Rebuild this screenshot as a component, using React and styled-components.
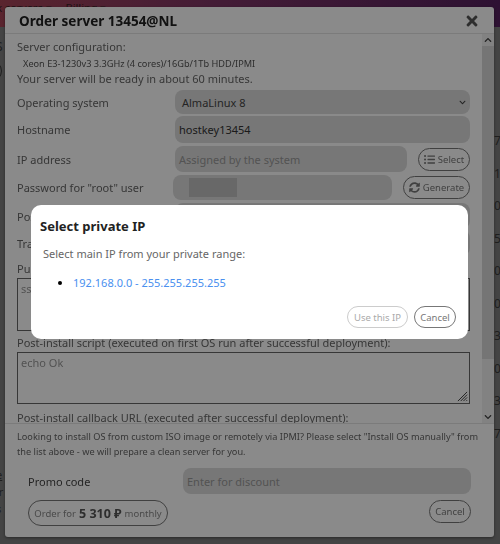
import React from 'react';
import styled, { createGlobalStyle } from 'styled-components';
import { FaTimes, FaListUl, FaSyncAlt, FaChevronDown, FaChevronUp } from 'react-icons/fa';

const GlobalStyle = createGlobalStyle`
  html, body {
    margin: 0;
    height: 100%;
    overflow: hidden;
  }
  body {
    font-family: "Noto Sans", "Liberation Sans", sans-serif;
    background: #7e7e7e;
  }
`;

const rightCells = ['70', '10', '00', '50', '00', '00', '30', '00', '30', '70'];

function App() {
  return (
    <>
      <GlobalStyle />
      <Page>
        <TopBar>
          <NavItem>Rack servers ▾</NavItem>
          <NavItem>Billing ▾</NavItem>
        </TopBar>
        <PageBody>
          <LeftEdge>
            <span>S</span>
            <EdgeCircle />
            <EdgeFooter>
              <u>e</u>
              <span>ir</span>
              <span>s</span>
            </EdgeFooter>
          </LeftEdge>
          <RightEdge>
            {rightCells.map((cell, i) => (
              <span key={i}>{cell}</span>
            ))}
          </RightEdge>
        </PageBody>
      </Page>

      <Overlay $dim="0">
        <OrderModal>
          <ModalHeader>
            <ModalTitle>Order server 13454@NL</ModalTitle>
            <CloseIcon />
          </ModalHeader>

          <ModalScroll>
            <ScrollContent>
              <Line>Server configuration:</Line>
              <SmallLine>Xeon E3-1230v3 3.3GHz (4 cores)/16Gb/1Tb HDD/IPMI</SmallLine>
              <Line>Your server will be ready in about 60 minutes.</Line>

              <FormRow $mt="3px">
                <Label>Operating system</Label>
                <SelectBox>
                  AlmaLinux 8
                  <FaChevronDown size={7} />
                </SelectBox>
              </FormRow>
              <FormRow $mt="2px">
                <Label>Hostname</Label>
                <Field $h="27px">hostkey13454</Field>
              </FormRow>
              <FormRow $mt="3px">
                <Label>IP address</Label>
                <Field $h="26px" $placeholder>Assigned by the system</Field>
                <PillButton $ml="11px" $w="52px" $h="23px">
                  <FaListUl size={11} /> Select
                </PillButton>
              </FormRow>
              <FormRow $mt="3px">
                <Label>Password for "root" user</Label>
                <Field $h="25px" $ml="-2px">
                  <BlurPatch />
                </Field>
                <PillButton $ml="11px" $w="67px" $h="23px">
                  <FaSyncAlt size={11} /> Generate
                </PillButton>
              </FormRow>
              <FormRow $mt="3px">
                <Label>Post-install action</Label>
                <Field $h="26px" />
              </FormRow>
              <FormRow $mt="1px">
                <Label>Traffic plan</Label>
                <Field $h="26px" />
              </FormRow>

              <BlockLabel $mt="5px">Public SSH keys</BlockLabel>
              <TextBox $h="53px">ssh-rsa</TextBox>
              <BlockLabel $mt="4px">
                Post-install script (executed on first OS run after successful deployment):
              </BlockLabel>
              <TextBox $h="52px">
                echo Ok
                <Grip viewBox="0 0 12 12">
                  <path d="M11 1 1 11M11 4 4 11M11 7 7 11M11 10 10 11" stroke="#333" strokeWidth="1" />
                </Grip>
              </TextBox>
              <BlockLabel $mt="6px">
                Post-install callback URL (executed after successful deployment):
              </BlockLabel>
            </ScrollContent>
            <ScrollBar>
              <ScrollArrow>
                <FaChevronUp size={8} />
              </ScrollArrow>
              <ScrollThumb />
              <ScrollTrack />
              <ScrollArrow>
                <FaChevronDown size={8} />
              </ScrollArrow>
            </ScrollBar>
          </ModalScroll>

          <ModalFooter>
            <Hint>
              Looking to install OS from custom ISO image or remotely via IPMI? Please select "Install OS manually" from
              <br />
              the list above - we will prepare a clean server for you.
            </Hint>
            <PromoRow>
              <PromoLabel>Promo code</PromoLabel>
              <Field $h="26px" $placeholder $w="288px">Enter for discount</Field>
            </PromoRow>
            <ActionRow>
              <OrderButton>
                <span>Order for</span>
                <strong>5 310 ₽</strong>
                <span>monthly</span>
              </OrderButton>
              <PillButton $w="42px" $h="23px">Cancel</PillButton>
            </ActionRow>
          </ModalFooter>
        </OrderModal>
      </Overlay>

      <Overlay $dim="0.46">
        <Dialog>
          <DialogTitle>Select private IP</DialogTitle>
          <DialogText>Select main IP from your private range:</DialogText>
          <RangeList>
            <li>
              <RangeLink href="#">192.168.0.0 - 255.255.255.255</RangeLink>
            </li>
          </RangeList>
          <DialogActions>
            <PillButton $w="61px" $h="22px" $disabled>Use this IP</PillButton>
            <PillButton $w="42px" $h="22px">Cancel</PillButton>
          </DialogActions>
        </Dialog>
      </Overlay>
    </>
  );
}

const Page = styled.div`
  width: 500px;
  height: 544px;
  display: flex;
  flex-direction: column;
  overflow: hidden;
  background: #7e7e7e;
`;

const TopBar = styled.div`
  height: 27px;
  flex: none;
  display: flex;
  gap: 14px;
  margin-left: -22px;
  width: 522px;
  background: linear-gradient(90deg, #aa4655 0%, #7e3565 45%, #55215e 100%);
  color: #3a2025;
  font-size: 11px;
  line-height: 15px;
`;

const NavItem = styled.span`
  white-space: nowrap;
`;

const PageBody = styled.div`
  flex: 1;
  display: flex;
  justify-content: space-between;
  color: #3a3a3a;
  font-size: 12px;
`;

const LeftEdge = styled.div`
  display: flex;
  flex-direction: column;
  align-items: flex-start;
  padding-top: 11px;
  margin-left: -4px;
`;

const EdgeCircle = styled.div`
  width: 20px;
  height: 20px;
  margin: 5px 0 0 -16px;
  border: 1px solid #3a3a3a;
  border-radius: 50%;
`;

const EdgeFooter = styled.div`
  margin-top: auto;
  margin-bottom: 28px;
  display: flex;
  flex-direction: column;
  gap: 2px;
  font-size: 11px;
  line-height: 15px;
`;

const RightEdge = styled.div`
  display: flex;
  flex-direction: column;
  gap: 16px;
  padding: 106px 0 0 0;
  width: 6px;
  overflow: hidden;
  line-height: 16.5px;

  span {
    display: block;
  }
`;

const Overlay = styled.div`
  position: fixed;
  inset: 0;
  display: flex;
  align-items: center;
  justify-content: center;
  padding-right: 1px;
  background: rgba(0, 0, 0, ${(p) => p.$dim});
`;

const OrderModal = styled.div`
  width: 489px;
  height: 530px;
  display: flex;
  flex-direction: column;
  border-radius: 3px;
  background: #fff;
  color: #666;
  box-shadow: 0 1px 3px rgba(0, 0, 0, 0.4);
`;

const ModalHeader = styled.div`
  height: 27px;
  flex: none;
  display: flex;
  align-items: center;
  justify-content: space-between;
  padding: 1px 14px 0 14px;
  box-sizing: border-box;
  border-bottom: 1px solid #e4e4e4;
`;

const ModalTitle = styled.div`
  font-size: 13.5px;
  font-weight: 700;
  color: #222;
`;

const CloseIcon = styled(FaTimes)`
  width: 16px;
  height: 16px;
  color: #555;
`;

const ModalScroll = styled.div`
  flex: 1;
  min-height: 0;
  display: flex;
  overflow: hidden;
  border-bottom: 1px solid #e4e4e4;
`;

const ScrollContent = styled.div`
  flex: 1;
  min-width: 0;
  padding: 5px 0 0 12px;
  font-size: 11px;
`;

const ScrollBar = styled.div`
  width: 12px;
  flex: none;
  margin-left: 12px;
  display: flex;
  flex-direction: column;
  background: #f1f1f1;
`;

const ScrollArrow = styled.div`
  height: 12px;
  flex: none;
  display: flex;
  align-items: center;
  justify-content: center;
  color: #444;
`;

const ScrollThumb = styled.div`
  height: 313px;
  flex: none;
  background: #d8d8d8;
`;

const ScrollTrack = styled.div`
  flex: 1;
`;

const Line = styled.div`
  height: 16px;
  line-height: 16px;
  white-space: nowrap;
`;

const SmallLine = styled(Line)`
  padding-left: 6px;
  font-size: 9.2px;
  line-height: 17px;
  color: #555;
`;

const FormRow = styled.div`
  display: flex;
  align-items: center;
  margin-top: ${(p) => p.$mt};
`;

const Label = styled.div`
  width: 158px;
  flex: none;
  white-space: nowrap;
  overflow: hidden;
`;

const fieldBg = '#dcdcdc';

const SelectBox = styled.div`
  flex: 1;
  height: 24px;
  display: flex;
  align-items: center;
  justify-content: space-between;
  padding: 0 4px 0 7px;
  border-radius: 8px;
  background: ${fieldBg};
  color: #444;
`;

const Field = styled.div`
  position: relative;
  flex: ${(p) => (p.$w ? 'none' : '1')};
  width: ${(p) => p.$w || 'auto'};
  height: ${(p) => p.$h};
  margin-left: ${(p) => p.$ml || 0};
  display: flex;
  align-items: center;
  padding: 0 4px;
  box-sizing: border-box;
  border-radius: 8px;
  background: ${fieldBg};
  color: ${(p) => (p.$placeholder ? '#999' : '#333')};
`;

const BlurPatch = styled.div`
  position: absolute;
  left: 16px;
  top: 3px;
  width: 48px;
  height: 19px;
  background: #c0c0c0;
  filter: blur(0.5px);
`;

const PillButton = styled.div`
  flex: none;
  width: ${(p) => p.$w};
  height: ${(p) => p.$h};
  margin-left: ${(p) => p.$ml || 0};
  display: flex;
  align-items: center;
  justify-content: center;
  gap: 3px;
  box-sizing: border-box;
  border: 1px solid ${(p) => (p.$disabled ? '#ccc' : '#777')};
  border-radius: 12px;
  background: #fff;
  color: ${(p) => (p.$disabled ? '#aaa' : '#777')};
  font-size: 9.5px;
  white-space: nowrap;
`;

const BlockLabel = styled.div`
  margin-top: ${(p) => p.$mt};
  height: 16px;
  line-height: 16px;
  white-space: nowrap;
`;

const TextBox = styled.div`
  position: relative;
  height: ${(p) => p.$h};
  margin-top: 1px;
  padding: 2px 3px;
  box-sizing: border-box;
  border: 1px solid #666;
  color: #999;
`;

const Grip = styled.svg`
  position: absolute;
  right: 1px;
  bottom: 1px;
  width: 11px;
  height: 11px;
`;

const ModalFooter = styled.div`
  height: 113px;
  flex: none;
  padding: 6px 23px 0 12px;
  box-sizing: border-box;
`;

const Hint = styled.div`
  font-size: 9.2px;
  line-height: 14.5px;
  color: #666;
  white-space: nowrap;
`;

const PromoRow = styled.div`
  display: flex;
  align-items: center;
  justify-content: space-between;
  margin-top: 9px;
  padding-left: 11px;
  font-size: 11px;
`;

const PromoLabel = styled.div`
  color: #444;
`;

const ActionRow = styled.div`
  display: flex;
  align-items: flex-start;
  justify-content: space-between;
  margin-top: 6px;
  padding-left: 11px;
`;

const OrderButton = styled.div`
  width: 140px;
  height: 26px;
  display: flex;
  align-items: center;
  justify-content: center;
  gap: 3px;
  box-sizing: border-box;
  border: 1px solid #777;
  border-radius: 13px;
  color: #888;
  font-size: 9.5px;
  white-space: nowrap;

  strong {
    font-size: 12.5px;
    color: #555;
  }
`;

const Dialog = styled.div`
  width: 437px;
  height: 134px;
  display: flex;
  flex-direction: column;
  padding: 12px 12px 11px 9px;
  box-sizing: border-box;
  border-radius: 10px;
  background: #fff;
`;

const DialogTitle = styled.div`
  font-size: 13px;
  font-weight: 700;
  line-height: 18px;
  color: #222;
`;

const DialogText = styled.div`
  margin: 11px 0 0 3px;
  font-size: 11px;
  line-height: 16px;
  color: #666;
`;

const RangeList = styled.ul`
  margin: 13px 0 0;
  padding-left: 33px;
  font-size: 11px;
  line-height: 16px;
`;

const RangeLink = styled.a`
  color: #4a90ef;
  text-decoration: none;
`;

const DialogActions = styled.div`
  margin-top: auto;
  display: flex;
  justify-content: flex-end;
  gap: 6px;
`;

export default App;
